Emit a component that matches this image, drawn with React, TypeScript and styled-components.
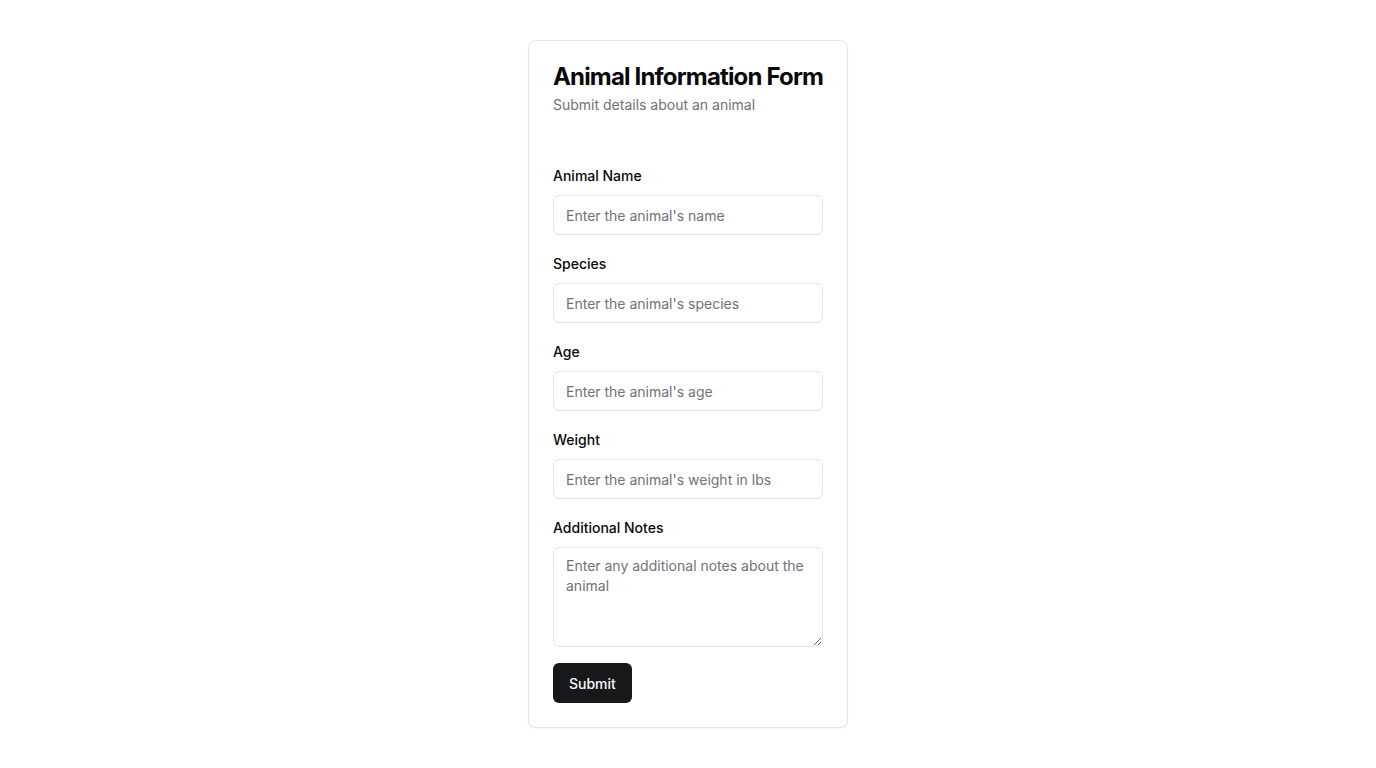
import React from "react";
import styled, { createGlobalStyle } from "styled-components";

const GlobalStyle = createGlobalStyle`
  *, *::before, *::after { box-sizing: border-box; }
  body {
    margin: 0;
    background: #ffffff;
    font-family: Inter, "Noto Sans", sans-serif;
    color: #09090b;
    line-height: 1.5;
    font-size: 16px;
  }
`;

const Page = styled.main`
  display: flex;
  justify-content: center;
  align-items: flex-start;
  padding: 40px 0;
`;

const Card = styled.div`
  width: 320px;
  border: 1px solid #e4e4e7;
  border-radius: 8px;
  background: #ffffff;
  box-shadow: 0 1px 2px 0 rgba(0, 0, 0, 0.05);
`;

const Header = styled.div`
  display: flex;
  flex-direction: column;
  gap: 6px;
  padding: 24px;
`;

const Title = styled.h3`
  margin: 0;
  font-size: 24px;
  line-height: 1;
  font-weight: 700;
  letter-spacing: -0.83px;
  white-space: nowrap;
  color: #09090b;
`;

const Subtitle = styled.p`
  margin: 0;
  font-size: 14px;
  line-height: 20px;
  color: #71717a;
`;

const Content = styled.div`
  padding: 24px;
`;

const Form = styled.form`
  display: flex;
  flex-direction: column;
  gap: 16px;
`;

const Field = styled.div`
  display: flex;
  flex-direction: column;
  gap: 8px;
`;

const LabelLine = styled.div`
  height: 24px;
  line-height: 24px;
  font-size: 16px;
`;

const Label = styled.label`
  font-size: 14px;
  font-weight: 500;
  line-height: 1;
  color: #09090b;
`;

const Input = styled.input`
  display: flex;
  width: 100%;
  height: 40px;
  border: 1px solid #e4e4e7;
  border-radius: 6px;
  background: #ffffff;
  padding: 8px 12px;
  font-family: inherit;
  font-size: 14px;
  color: #09090b;
  outline: none;
  &::placeholder { color: #71717a; }
`;

const TextArea = styled.textarea`
  display: flex;
  width: 100%;
  height: 100px;
  border: 1px solid #e4e4e7;
  border-radius: 6px;
  background: #ffffff;
  padding: 8px 12px;
  font-family: inherit;
  font-size: 14px;
  line-height: 20px;
  color: #09090b;
  outline: none;
  &::placeholder { color: #71717a; }
`;

const Button = styled.button`
  align-self: flex-start;
  display: inline-flex;
  align-items: center;
  justify-content: center;
  height: 40px;
  padding: 0 16px;
  border: none;
  border-radius: 6px;
  background: #18181b;
  color: #fafafa;
  font-family: inherit;
  font-size: 14px;
  font-weight: 500;
  cursor: pointer;
`;

const fields = [
  { id: "name", label: "Animal Name", placeholder: "Enter the animal's name" },
  { id: "species", label: "Species", placeholder: "Enter the animal's species" },
  { id: "age", label: "Age", placeholder: "Enter the animal's age" },
  { id: "weight", label: "Weight", placeholder: "Enter the animal's weight in lbs" },
];

export default function App() {
  return (
    <>
      <GlobalStyle />
      <Page>
        <Card>
          <Header>
            <Title>Animal Information Form</Title>
            <Subtitle>Submit details about an animal</Subtitle>
          </Header>
          <Content>
            <Form onSubmit={(e) => e.preventDefault()}>
              {fields.map((f) => (
                <Field key={f.id}>
                  <LabelLine>
                    <Label htmlFor={f.id}>{f.label}</Label>
                  </LabelLine>
                  <Input id={f.id} placeholder={f.placeholder} />
                </Field>
              ))}
              <Field>
                <LabelLine>
                  <Label htmlFor="notes">Additional Notes</Label>
                </LabelLine>
                <TextArea id="notes" placeholder="Enter any additional notes about the animal" />
              </Field>
              <Button type="submit">Submit</Button>
            </Form>
          </Content>
        </Card>
      </Page>
    </>
  );
}
